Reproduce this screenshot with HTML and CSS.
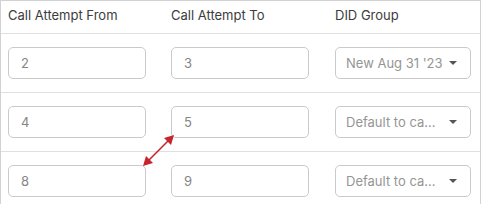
FILE: index.html
```html
<!DOCTYPE html>
<html>
<head>
<meta charset="utf-8">
<link rel="stylesheet" href="styles.css">
</head>
<body>
<div class="table">
  <div class="row head">
    <div class="cell">Call Attempt From</div>
    <div class="cell">Call Attempt To</div>
    <div class="cell">DID Group</div>
  </div>
  <div class="row">
    <div class="cell"><div class="input">2</div></div>
    <div class="cell"><div class="input">3</div></div>
    <div class="cell"><div class="select"><span class="val">New Aug 31 '23</span><span class="caret"></span></div></div>
  </div>
  <div class="row">
    <div class="cell"><div class="input">4</div></div>
    <div class="cell"><div class="input">5</div></div>
    <div class="cell"><div class="select"><span class="val">Default to ca...</span><span class="caret"></span></div></div>
  </div>
  <div class="row last">
    <div class="cell"><div class="input">8</div></div>
    <div class="cell"><div class="input">9</div></div>
    <div class="cell"><div class="select"><span class="val">Default to ca...</span><span class="caret"></span></div></div>
  </div>
  <svg class="arrow" width="40" height="40" viewBox="0 0 40 40">
    <line x1="8" y1="31" x2="28" y2="11" stroke="#c8242b" stroke-width="1.6"/>
    <polygon points="3,36 6,26 13,33" fill="#c8242b"/>
    <polygon points="34,5 24,8 31,15" fill="#c8242b"/>
  </svg>
</div>
</body>
</html>
```
FILE: styles.css
```css
html, body {
  margin: 0;
  padding: 0;
  background: #fff;
}
body {
  font-family: Inter, "Liberation Sans", sans-serif;
  font-size: 13px;
}
.table {
  position: relative;
  width: 479px;
  border: 1px solid #d2d2d2;
}
.row {
  display: grid;
  grid-template-columns: 163px 164px 152px;
  border-bottom: 1px solid #dfdfdf;
  padding: 13px 0 13px;
}
.row.last {
  border-bottom: none;
  padding-bottom: 8px;
}
.row.head {
  height: 32px;
  padding: 0;
  align-items: center;
}
.head .cell {
  color: #3c3c3c;
  padding-bottom: 4px;
}
.cell {
  padding-left: 7px;
  display: flex;
}
.input, .select {
  box-sizing: border-box;
  height: 32px;
  border: 1px solid #cacaca;
  border-radius: 5px;
  display: flex;
  align-items: center;
  background: #fff;
}
.input {
  width: 138px;
  padding-left: 12px;
  color: #858585;
}
.select {
  width: 136px;
  padding-left: 10px;
  color: #959595;
}
.val {
  white-space: nowrap;
}
.caret {
  margin-left: auto;
  margin-right: 13px;
  width: 0;
  height: 0;
  border-left: 4px solid transparent;
  border-right: 4px solid transparent;
  border-top: 4px solid #555;
}
.arrow {
  position: absolute;
  left: 139px;
  top: 129px;
}
```
